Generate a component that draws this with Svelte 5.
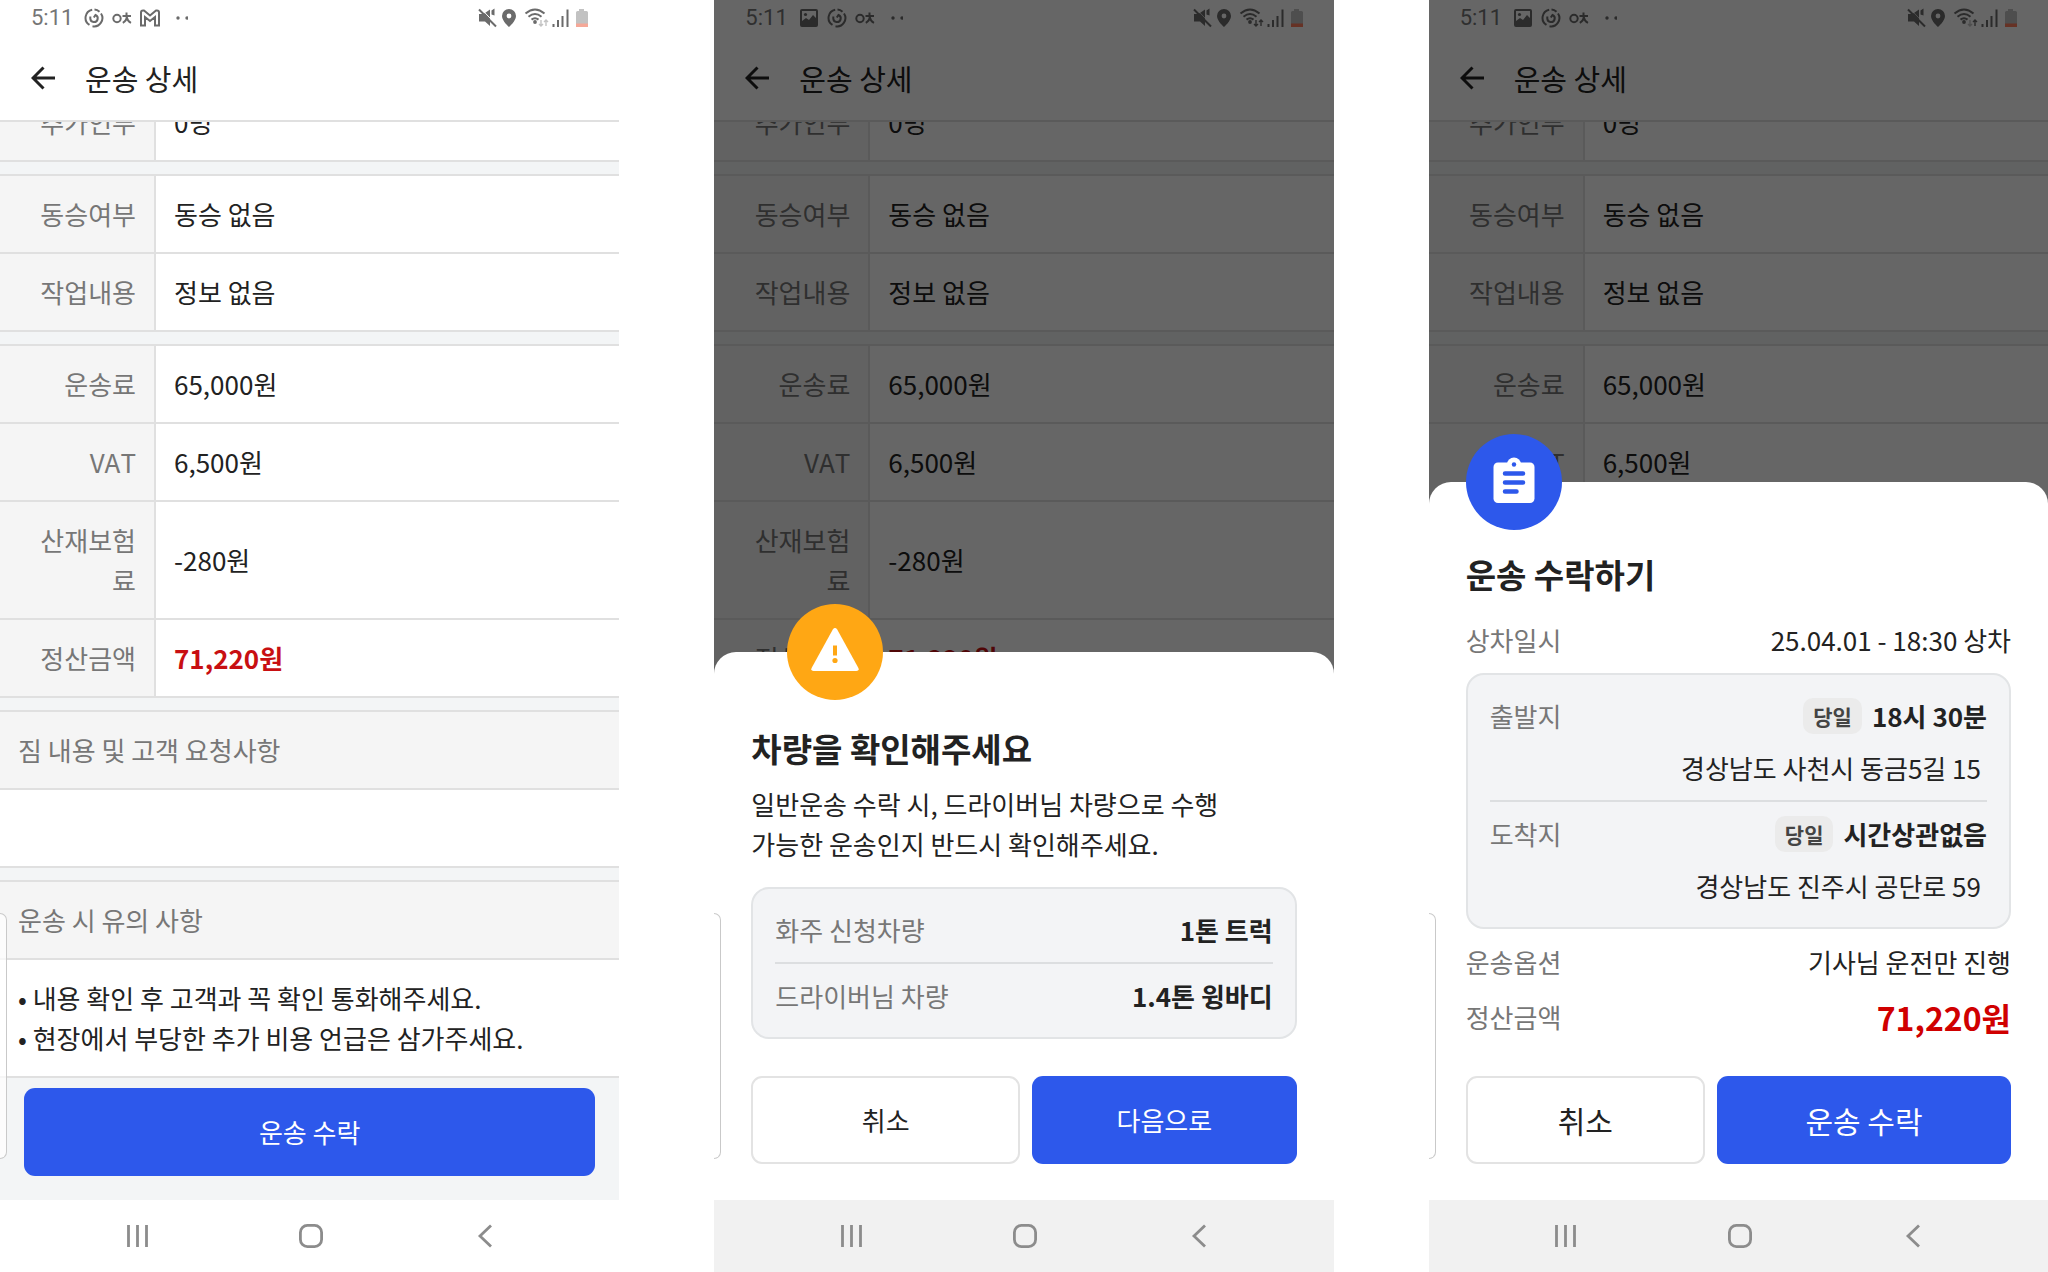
<script lang="ts">
  type Row = { label: string; value: string; strong?: boolean };
  type Stop = { label: string; day: string; time: string; address: string };
  type Screen = { id: string; icons: string[]; sheet: 'vehicle' | 'accept' | null; upOnly?: boolean };

  const sections: Row[][] = [
    [{ label: '추가인부', value: '0명' }],
    [
      { label: '동승여부', value: '동승 없음' },
      { label: '작업내용', value: '정보 없음' },
    ],
    [
      { label: '운송료', value: '65,000원' },
      { label: 'VAT', value: '6,500원' },
      { label: '산재보험료', value: '-280원' },
      { label: '정산금액', value: '71,220원', strong: true },
    ],
  ];

  const notices = [
    '내용 확인 후 고객과 꼭 확인 통화해주세요.',
    '현장에서 부당한 추가 비용 언급은 삼가주세요.',
  ];

  const vehicles: Row[] = [
    { label: '화주 신청차량', value: '1톤 트럭' },
    { label: '드라이버님 차량', value: '1.4톤 윙바디' },
  ];

  const stops: Stop[] = [
    { label: '출발지', day: '당일', time: '18시 30분', address: '경상남도 사천시 동금5길 15' },
    { label: '도착지', day: '당일', time: '시간상관없음', address: '경상남도 진주시 공단로 59' },
  ];

  const screens: Screen[] = [
    { id: 'detail', icons: ['swirl', 'talk', 'mail'], sheet: null },
    { id: 'vehicle', icons: ['photo', 'swirl', 'talk'], sheet: 'vehicle' },
    { id: 'accept', icons: ['photo', 'swirl', 'talk'], sheet: 'accept', upOnly: true },
  ];
</script>

{#snippet statusIcon(name: string)}
  <svg class="status-icon" viewBox="0 0 20 20" width="20" height="20" aria-hidden="true">
    {#if name === 'swirl'}
      <g fill="none" stroke="currentColor" stroke-width="2">
        <path d="M8.2 1.7A8.300 8.300 0 0 0 5.500 16.900" />
        <path d="M8.500 18.200A8.300 8.300 0 0 0 17 5.500" />
        <path d="M10.500 1.600A8.300 8.300 0 0 1 15.500 3.700" />
        <path d="M6.300 8.500v2a3.700 3.700 0 1 0 5.200-3.500l-1.700 2.500" />
      </g>
    {:else if name === 'talk'}
      <g fill="none" stroke="currentColor" stroke-width="2">
        <circle cx="5" cy="10.5" r="3.7" />
        <path d="M14.5 4.5v3M10.5 8h8.5M14.8 8c0 3-1.5 5.5-4 6.8M14.8 9.5c.5 2.5 2 4.3 4.2 5.3" />
      </g>
    {:else if name === 'mail'}
      <path
        d="M1 17.5V4.5q0-2 2-2h1l6 5 6-5h1q2 0 2 2v13h-4V9l-5 4-5-4v8.5z"
        fill="none"
        stroke="currentColor"
        stroke-width="2"
      />
    {:else}
      <path
        d="M3 1h14a2 2 0 0 1 2 2v14a2 2 0 0 1-2 2H3a2 2 0 0 1-2-2V3a2 2 0 0 1 2-2zm0 2v10l4-3 3 2 4-5 3 3V3z"
        fill="currentColor"
        fill-rule="evenodd"
      />
      <circle cx="6.5" cy="6.5" r="1.6" fill="currentColor" />
    {/if}
  </svg>
{/snippet}

{#snippet detail(screen: Screen)}
  <div class="status-bar">
    <span class="clock">5:11</span>
    {#each screen.icons as icon}
      {@render statusIcon(icon)}
    {/each}
    <svg class="status-icon" viewBox="0 0 20 20" width="20" height="20" aria-hidden="true">
      <circle cx="10" cy="10" r="1.7" fill="currentColor" />
      <circle cx="19" cy="10" r="1.7" fill="currentColor" />
    </svg>
    <svg class="status-right" viewBox="0 0 112 20" width="112" height="20" aria-hidden="true">
      <g fill="currentColor">
        <path d="M1 6h4.500L12 1.500v16.500l-5-4.500H1z" />
        <path d="M13.500 2.500l3-2v7l-3-1z" />
        <path d="M31 1a7 7 0 0 0-7 7c0 5 7 11 7 11s7-6 7-11a7 7 0 0 0-7-7zm0 4.6a2.4 2.4 0 1 1 0 4.8 2.4 2.4 0 0 1 0-4.8z" />
        <circle cx="57" cy="14" r="1.9" />
      </g>
      <path class="slash-gap" class:dimmed={screen.sheet !== null} d="M2.500 0l16 17" fill="none" stroke-width="1" />
      <g fill="none" stroke="currentColor" stroke-width="2">
        <path d="M1 1.5l17 17" />
        <path d="M47.5 5.5q9.5-8 19 0M50.5 8.7q6.5-5.4 13 0M53.5 11.6q3.5-2.7 7 0" />
      </g>
      <g fill="none" stroke="currentColor" stroke-width="1.4" class:faint={screen.sheet === null}>
        <path d="M63 12v6M61 16l2 2 2-2" class:faint={screen.upOnly} />
        <path d="M68 18v-6M66 14l2-2 2 2" />
      </g>
      <path d="M75.5 19v-3M80 19v-7M84.5 19V8M89.5 19V1.5" stroke="currentColor" stroke-width="2" />
      <path class="battery" d="M101 1h5v2h2.5q1.5 0 1.5 1.5V19H98V4.5Q98 3 99.5 3H101z" />
      <path class="charge" class:pale={screen.sheet === null} d="M98 15.5h12v3.5H98z" />
    </svg>
  </div>

  <header class="app-bar">
    <button class="icon-button" aria-label="뒤로">
      <svg viewBox="0 0 24 24" width="24" height="24" aria-hidden="true">
        <path d="M12.5 1.5L2 12l10.5 10.5M2 12h22" fill="none" stroke="currentColor" stroke-width="3" />
      </svg>
    </button>
    <h1>운송 상세</h1>
  </header>

  <main class="viewport">
    <div class="scrolled">
      {#each sections as rows}
        <table>
          <tbody>
            {#each rows as row}
              <tr>
                <th scope="row">{row.label}</th>
                <td class:amount={row.strong}>{row.value}</td>
              </tr>
            {/each}
          </tbody>
        </table>
      {/each}
      <section class="block">
        <h2>짐 내용 및 고객 요청사항</h2>
        <div class="block-body"></div>
      </section>
      <section class="block">
        <h2>운송 시 유의 사항</h2>
        <ul class="block-body">
          {#each notices as notice}
            <li>• {notice}</li>
          {/each}
        </ul>
      </section>
    </div>
  </main>

  <footer class="action-bar">
    <button class="btn primary">운송 수락</button>
  </footer>
{/snippet}

{#snippet vehicleSheet()}
  <section class="sheet vehicle">
    <div class="sheet-icon warning">
      <svg viewBox="0 0 48 48" width="48" height="48" aria-hidden="true">
        <path
          d="M21.8 1.5q2.2-2.8 4.4 0L47.4 40q1.1 3-2 3H2.6q-3.1 0-2-3z"
          fill="#fff"
        />
        <path d="M24 17.5v10" stroke="#ffa714" stroke-width="4" />
        <circle cx="24" cy="32.5" r="2.6" fill="#ffa714" />
      </svg>
    </div>
    <h2>차량을 확인해주세요</h2>
    <p>일반운송 수락 시, 드라이버님 차량으로 수행<br />가능한 운송인지 반드시 확인해주세요.</p>
    <dl class="card">
      {#each vehicles as vehicle}
        <div class="card-item line">
          <dt>{vehicle.label}</dt>
          <dd class="strong">{vehicle.value}</dd>
        </div>
      {/each}
    </dl>
    <div class="buttons">
      <button class="btn outline">취소</button>
      <button class="btn primary">다음으로</button>
    </div>
  </section>
{/snippet}

{#snippet acceptSheet()}
  <section class="sheet accept">
    <div class="sheet-icon clipboard">
      <svg viewBox="-2 -2 52 52" width="52" height="52" aria-hidden="true">
        <rect x="3.5" y="4.5" width="41" height="40.5" rx="4.5" fill="#fff" />
        <circle cx="24" cy="6.5" r="7" fill="#fff" />
        <circle cx="24" cy="6.5" r="2.2" fill="#2d58eb" />
        <path
          d="M15 15.5h18M15 24.5h18M15 33.5h11.5"
          stroke="#2d58eb"
          stroke-width="4.5"
          stroke-linecap="round"
        />
      </svg>
    </div>
    <h2>운송 수락하기</h2>
    <dl class="summary">
      <div class="line">
        <dt>상차일시</dt>
        <dd>25.04.01 - 18:30 상차</dd>
      </div>
    </dl>
    <div class="card">
      {#each stops as stop}
        <dl class="card-item">
          <div class="line">
            <dt>{stop.label}</dt>
            <dd class="strong"><span class="badge">{stop.day}</span>{stop.time}</dd>
          </div>
          <dd class="address">{stop.address}</dd>
        </dl>
      {/each}
    </div>
    <dl class="summary">
      <div class="line">
        <dt>운송옵션</dt>
        <dd>기사님 운전만 진행</dd>
      </div>
      <div class="line">
        <dt>정산금액</dt>
        <dd class="total">71,220원</dd>
      </div>
    </dl>
    <div class="buttons">
      <button class="btn outline">취소</button>
      <button class="btn primary">운송 수락</button>
    </div>
  </section>
{/snippet}

<div class="board">
  {#each screens as screen (screen.id)}
    <article class="phone">
      <div class="app">
        {@render detail(screen)}
        {#if screen.sheet}
          <div class="scrim"></div>
        {/if}
        {#if screen.sheet === 'vehicle'}
          {@render vehicleSheet()}
        {:else if screen.sheet === 'accept'}
          {@render acceptSheet()}
        {/if}
      </div>

      <nav class="system-nav" class:tinted={screen.sheet !== null}>
        <button aria-label="최근 앱">
          <svg viewBox="0 0 24 24" width="24" height="24" aria-hidden="true">
            <path d="M2.500 1v22M11.500 1v22M20.5 1v22" stroke="currentColor" stroke-width="2.8" />
          </svg>
        </button>
        <button aria-label="홈">
          <svg viewBox="0 0 24 24" width="24" height="24" aria-hidden="true">
            <rect x="1.4" y="1.4" width="21.2" height="21.2" rx="7" fill="none" stroke="currentColor" stroke-width="2.8" />
          </svg>
        </button>
        <button aria-label="이전">
          <svg viewBox="0 0 24 24" width="24" height="24" aria-hidden="true">
            <path d="M18 1.5L7 12l11 10.5" fill="none" stroke="currentColor" stroke-width="2.8" />
          </svg>
        </button>
      </nav>

      <div class="edge-handle"></div>
    </article>
  {/each}
</div>

<style>
  :global(body) {
    margin: 0;
    background: #fff;
  }

  .board {
    display: grid;
    grid-template-columns: repeat(3, minmax(0, 1fr));
    gap: 95px;
    height: 100vh;
    color: #222;
    font-family: 'Noto Sans CJK KR', sans-serif;
    font-size: 26px;
    font-kerning: none;
    line-height: 40px;
  }

  .phone {
    position: relative;
    display: flex;
    flex-direction: column;
    min-height: 0;
    overflow: hidden;
  }

  .app {
    position: relative;
    flex: 1;
    min-height: 0;
    display: flex;
    flex-direction: column;
    background: #fff;
  }

  h1,
  h2,
  p,
  ul,
  dl,
  dd {
    margin: 0;
    padding: 0;
  }

  button {
    padding: 0;
    border: 0;
    background: none;
    color: inherit;
    font: inherit;
    cursor: pointer;
  }

  svg {
    display: block;
  }

  .status-bar {
    display: flex;
    align-items: center;
    gap: 8px;
    height: 36px;
    padding: 0 29px 0 31px;
    color: #6b6b6b;
  }

  .clock {
    margin-right: 3px;
    font-family: Roboto, sans-serif;
    font-size: 22px;
    line-height: 36px;
    color: #757575;
  }

  .status-right {
    margin-left: auto;
  }

  .slash-gap {
    stroke: #fff;
  }

  .slash-gap.dimmed {
    opacity: 0.6;
  }

  .faint {
    opacity: 0.4;
  }

  .battery {
    fill: #c2c2c2;
  }

  .charge {
    fill: #ff7d5c;
  }

  .charge.pale {
    fill: #f5a898;
  }

  .app-bar {
    display: flex;
    align-items: center;
    gap: 30px;
    height: 84px;
    padding-left: 31px;
    border-bottom: 2px solid #e0e0e0;
  }

  .icon-button {
    width: 24px;
    height: 24px;
  }

  h1 {
    font-size: 29px;
    font-weight: 400;
  }

  .viewport {
    flex: 1;
    min-height: 0;
    overflow: hidden;
    background: #f3f5f6;
  }

  /* the list is scrolled down until its first row is half out of view */
  .scrolled {
    display: flex;
    flex-direction: column;
    gap: 12px;
    margin-top: -40px;
  }

  table {
    width: 100%;
    table-layout: fixed;
    border-spacing: 0;
    border-top: 2px solid #e0e0e0;
    background: #fff;
  }

  th,
  td {
    box-sizing: border-box;
    padding: 18px;
    border-bottom: 2px solid #e0e0e0;
    font-weight: 400;
    text-align: left;
    vertical-align: middle;
  }

  th {
    width: 156px;
    border-right: 2px solid #e0e0e0;
    background: #f5f5f5;
    color: #777;
    text-align: right;
    word-break: break-all;
  }

  .amount {
    color: #c80f12;
    font-weight: 700;
  }

  .block {
    border-top: 2px solid #e0e0e0;
  }

  .block h2,
  .block-body {
    min-height: 40px;
    padding: 18px;
    border-bottom: 2px solid #e0e0e0;
  }

  .block h2 {
    background: #f5f5f5;
    color: #777;
    font-size: 26px;
    font-weight: 400;
  }

  .block-body {
    background: #fff;
    list-style: none;
  }

  .action-bar {
    display: flex;
    padding: 8px 24px 24px;
    background: #f3f5f6;
  }

  .btn {
    flex: 1;
    box-sizing: border-box;
    height: 88px;
    border-radius: 11px;
  }

  .primary {
    background: #2d58eb;
    color: #fff;
  }

  .outline {
    border: 2px solid #e3e3e3;
    background: #fff;
  }

  .scrim {
    position: absolute;
    inset: 0;
    background: rgba(0, 0, 0, 0.6);
  }

  .sheet {
    position: absolute;
    right: 0;
    bottom: 0;
    left: 0;
    padding: 74px 37px 36px;
    border-radius: 22px 22px 0 0;
    background: #fff;
  }

  .sheet.accept {
    padding-top: 70px;
  }

  .sheet-icon {
    position: absolute;
    top: -48px;
    left: 37px;
    display: flex;
    align-items: center;
    justify-content: center;
    width: 96px;
    height: 96px;
    border-radius: 50%;
  }

  .sheet-icon.warning {
    left: 73px;
    background: #ffa714;
  }

  .sheet-icon.clipboard {
    background: #2d58eb;
  }

  .sheet h2 {
    margin-bottom: 14px;
    font-size: 33px;
    font-weight: 700;
    line-height: 44px;
  }

  .sheet.accept h2 {
    margin-bottom: 24px;
  }

  .sheet p {
    margin-bottom: 23px;
  }

  .summary {
    display: flex;
    flex-direction: column;
    gap: 13px;
  }

  .line {
    display: flex;
    align-items: center;
    justify-content: space-between;
  }

  dt {
    color: #777;
  }

  .strong {
    display: flex;
    align-items: center;
    gap: 10px;
    font-weight: 700;
  }

  .card {
    padding: 21px 22px;
    border: 2px solid #e2e4e6;
    border-radius: 18px;
    background: #f3f4f6;
  }

  .summary + .card,
  .card + .summary {
    margin-top: 13px;
  }

  .card-item + .card-item {
    margin-top: 12px;
    padding-top: 12px;
    border-top: 2px solid #dcdee0;
  }

  .address {
    margin-top: 12px;
    padding-right: 6px;
    text-align: right;
  }

  .badge {
    padding: 0 10px;
    border-radius: 10px;
    background: #ebebeb;
    color: #444;
    font-size: 21px;
    line-height: 36px;
  }

  .total {
    color: #d00000;
    font-size: 32px;
    font-weight: 700;
    line-height: 44px;
  }

  .buttons {
    display: flex;
    gap: 12px;
    margin-top: 37px;
  }

  .accept .buttons {
    font-size: 30px;
  }

  .accept .buttons .outline {
    flex: 4;
  }

  .accept .buttons .primary {
    flex: 5;
  }

  .system-nav {
    display: grid;
    grid-template-columns: repeat(3, 1fr);
    height: 72px;
    padding: 0 48px 0 51px;
    background: #fff;
    color: #8c8c8c;
  }

  .system-nav.tinted {
    background: #f1f1f1;
  }

  .system-nav button {
    display: flex;
    align-items: center;
    justify-content: center;
  }

  .edge-handle {
    position: absolute;
    bottom: 113px;
    left: 0;
    width: 6px;
    height: 244px;
    border: 1px solid #c9c9c9;
    border-left: 0;
    border-radius: 0 7px 7px 0;
    background: rgba(255, 255, 255, 0.7);
  }
</style>
